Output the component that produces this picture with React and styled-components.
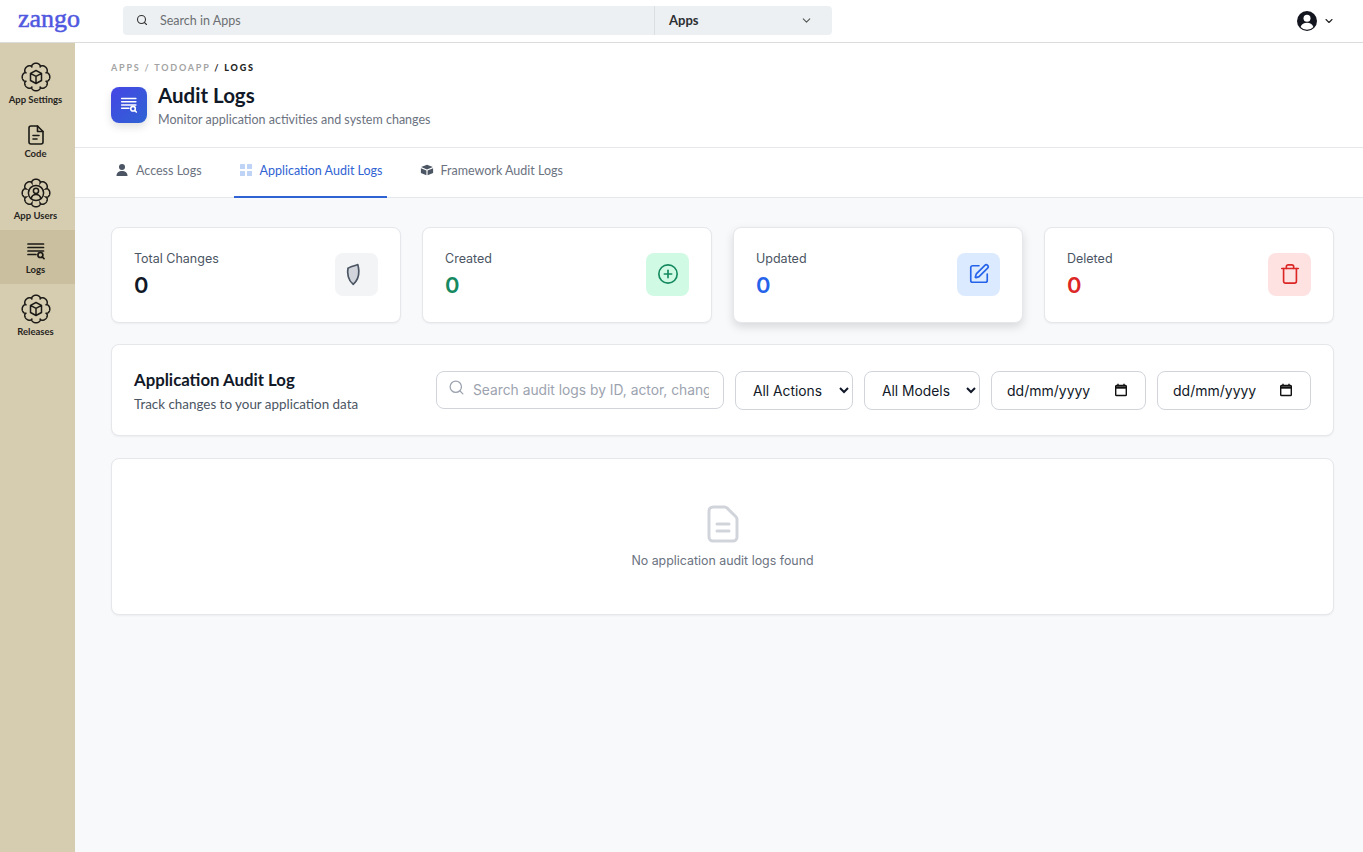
import styled, { createGlobalStyle } from 'styled-components';
import { ChevronDown, CirclePlus, Search, SquarePen, Trash } from 'lucide-react';

const GlobalStyle = createGlobalStyle`
  html, body {
    margin: 0;
    height: 100%;
    background: #fff;
  }
  #root {
    height: 100%;
  }
  * {
    box-sizing: border-box;
  }
`;

const gearPath = () => {
  const points = [];
  for (let i = 0; i < 240; i++) {
    const angle = (i / 240) * Math.PI * 2;
    const radius = 10.8 + 3 * Math.pow(Math.abs(Math.cos(angle * 4)), 0.45);
    points.push(`${(16 + radius * Math.sin(angle)).toFixed(2)} ${(16 - radius * Math.cos(angle)).toFixed(2)}`);
  }
  return `M${points.join('L')}Z`;
};

const GearCube = () => (
  <svg width="32" height="32" viewBox="0 0 32 32" fill="none" stroke="#1b1a16" strokeWidth="1.5" strokeLinejoin="round">
    <path d={gearPath()} />
    <path d="M16 9.500l5.500 2.800v7.200L16 22.500l-5.500-3v-7.200zM10.500 12.300l5.500 3 5.500-3M16 15.300v7.200" />
  </svg>
);

const GearUser = () => (
  <svg width="32" height="32" viewBox="0 0 32 32" fill="none" stroke="#1b1a16" strokeWidth="1.5" strokeLinecap="round">
    <path d={gearPath()} />
    <circle cx="16" cy="16" r="7.600" />
    <circle cx="16" cy="13.800" r="2.600" />
    <path d="M11.200 21.400c.6-2.800 2.400-4 4.800-4s4.200 1.200 4.800 4" />
  </svg>
);

const CodeFile = () => (
  <svg width="24" height="24" viewBox="0 0 24 24" fill="none" stroke="#1b1a16" strokeWidth="1.6" strokeLinecap="round" strokeLinejoin="round">
    <path d="M13.500 3H7a2 2 0 0 0-2 2v14a2 2 0 0 0 2 2h10a2 2 0 0 0 2-2V8.500z" />
    <path d="M13.500 3v5.500H19M9 12.500h6M9 16h4" />
  </svg>
);

const LogLines = ({ color = '#1b1a16', size = 24 }) => (
  <svg width={size} height={size} viewBox="0 0 24 24" fill="none" stroke={color} strokeWidth="1.7" strokeLinecap="round">
    <path d="M4 5h15.500M4 8.500h15.500M4 12h15.500M4 15.500h8" />
    <circle cx="16.400" cy="16" r="2.500" />
    <path d="M18.300 18l1.700 1.700" />
  </svg>
);

const Avatar = () => (
  <svg width="22" height="22" viewBox="0 0 22 22">
    <circle cx="11" cy="11" r="10" fill="#14161f" />
    <circle cx="11" cy="8.300" r="3.500" fill="#fff" />
    <path d="M4.600 17c1-3 3.400-4.300 6.400-4.300s5.400 1.300 6.400 4.300a8.600 8.600 0 0 1-12.800 0z" fill="#fff" />
  </svg>
);

const PersonIcon = () => (
  <svg width="14" height="14" viewBox="0 0 14 14" fill="#4b5563">
    <circle cx="7" cy="4" r="3" />
    <path d="M1.500 13c0-3.300 2.200-5 5.500-5s5.500 1.700 5.500 5z" />
  </svg>
);

const GridIcon = () => (
  <svg width="14" height="14" viewBox="0 0 14 14" fill="#bfd3f6">
    <rect x="1" y="1" width="5" height="5" rx=".6" />
    <rect x="8" y="1" width="5" height="5" rx=".6" />
    <rect x="1" y="8" width="5" height="5" rx=".6" />
    <rect x="8" y="8" width="5" height="5" rx=".6" />
  </svg>
);

const BoxIcon = () => (
  <svg width="14" height="14" viewBox="0 0 14 14" fill="#4b5563">
    <path d="M7 1.800l5.800 2.300L7 6.400 1.200 4.100z" />
    <path d="M.9 5.200l5.500 2.200v4.800L.9 10zM13.100 5.200L7.600 7.400v4.800l5.500-2.200z" />
  </svg>
);

const ShieldIcon = () => (
  <svg width="24" height="24" viewBox="1 0 24 24" fill="#d1d5db" stroke="#4b5563" strokeWidth="1.700" strokeLinejoin="round">
    <path d="M13.800 2.600C11 3.400 7 4.500 4 6.200 3 11 4 18.500 9.200 22.300 13 19 15 14 14.800 9c-.1-2.500-.5-4.500-1-6.400z" />
  </svg>
);

const EmptyFile = () => (
  <svg width="34" height="40" viewBox="0 0 34 40" fill="none" stroke="#d1d5db" strokeWidth="3" strokeLinecap="round" strokeLinejoin="round">
    <path d="M7 3h11.500c1 0 2 .4 2.700 1.100l8.700 8.700c.7.700 1.100 1.700 1.100 2.700V33a4 4 0 0 1-4 4H7a4 4 0 0 1-4-4V7a4 4 0 0 1 4-4z" />
    <path d="M11 20h12M11 27h12" />
  </svg>
);

const CalendarGlyph = () => (
  <svg width="14" height="14" viewBox="0 0 14 14" fill="none" stroke="#111" strokeWidth="1.400">
    <rect x="1.700" y="2.500" width="10.600" height="10" rx=".8" />
    <path d="M1.700 4.500h10.600" strokeWidth="2.400" />
    <path d="M4 .8v2M10 .8v2" />
  </svg>
);

const navItems = [
  { label: 'App Settings', icon: <GearCube /> },
  { label: 'Code', icon: <CodeFile /> },
  { label: 'App Users', icon: <GearUser /> },
  { label: 'Logs', icon: <LogLines />, active: true },
  { label: 'Releases', icon: <GearCube /> },
];

const stats = [
  { label: 'Total Changes', color: '#111827', tint: '#f3f4f6', icon: <ShieldIcon /> },
  { label: 'Created', color: '#15895f', tint: '#d1fae5', icon: <CirclePlus size={22} color="#15895f" strokeWidth={1.8} /> },
  { label: 'Updated', color: '#2563eb', tint: '#dbeafe', icon: <SquarePen size={22} color="#2563eb" strokeWidth={1.8} />, raised: true },
  { label: 'Deleted', color: '#dc2626', tint: '#fee2e2', icon: <Trash size={22} color="#dc2626" strokeWidth={1.8} /> },
];

const App = () => (
  <Page>
    <GlobalStyle />
    <TopBar>
      <Logo>zango</Logo>
      <SearchBar>
        <SearchArea>
          <Search size={12} color="#333" strokeWidth={2.2} />
          <span>Search in Apps</span>
        </SearchArea>
        <AppsArea>
          <span>Apps</span>
          <ChevronDown size={13} color="#555" />
        </AppsArea>
      </SearchBar>
      <UserMenu>
        <Avatar />
        <ChevronDown size={12} color="#222" strokeWidth={2.2} />
      </UserMenu>
    </TopBar>

    <Body>
      <Sidebar>
        {navItems.map(item => (
          <NavItem key={item.label} $active={item.active}>
            {item.icon}
            <NavLabel>{item.label}</NavLabel>
          </NavItem>
        ))}
      </Sidebar>

      <Main>
        <PageHeader>
          <Breadcrumb>
            APPS / TODOAPP <strong>/ LOGS</strong>
          </Breadcrumb>
          <TitleRow>
            <TitleIcon>
              <LogLines color="#fff" size={22} />
            </TitleIcon>
            <div>
              <Title>Audit Logs</Title>
              <Subtitle>Monitor application activities and system changes</Subtitle>
            </div>
          </TitleRow>
        </PageHeader>

        <Tabs>
          <Tab>
            <PersonIcon />
            Access Logs
          </Tab>
          <Tab $active>
            <GridIcon />
            Application Audit Logs
          </Tab>
          <Tab>
            <BoxIcon />
            Framework Audit Logs
          </Tab>
        </Tabs>

        <Content>
          <StatsGrid>
            {stats.map(stat => (
              <StatCard key={stat.label} $raised={stat.raised}>
                <div>
                  <StatLabel>{stat.label}</StatLabel>
                  <StatValue $color={stat.color}>0</StatValue>
                </div>
                <StatIcon $tint={stat.tint}>{stat.icon}</StatIcon>
              </StatCard>
            ))}
          </StatsGrid>

          <FilterCard>
            <div>
              <FilterTitle>Application Audit Log</FilterTitle>
              <FilterHint>Track changes to your application data</FilterHint>
            </div>
            <Filters>
              <SearchBox>
                <Search size={17} color="#9ca3af" strokeWidth={1.8} />
                <SearchInput placeholder="Search audit logs by ID, actor, changes..." />
              </SearchBox>
              <Select $width={118} defaultValue="all">
                <option value="all">All Actions</option>
              </Select>
              <Select $width={116} defaultValue="all">
                <option value="all">All Models</option>
              </Select>
              <DateBox $width={155}>
                <span>dd/mm/yyyy</span>
                <CalendarGlyph />
              </DateBox>
              <DateBox $width={154}>
                <span>dd/mm/yyyy</span>
                <CalendarGlyph />
              </DateBox>
            </Filters>
          </FilterCard>

          <EmptyCard>
            <EmptyFile />
            <EmptyText>No application audit logs found</EmptyText>
          </EmptyCard>
        </Content>
      </Main>
    </Body>
  </Page>
);

export default App;

const Page = styled.div`
  display: flex;
  flex-direction: column;
  height: 100vh;
  font-family: Inter, 'Liberation Sans', sans-serif;
  color: #111827;
`;

const TopBar = styled.header`
  display: flex;
  align-items: center;
  flex: none;
  height: 43px;
  padding: 0 28px 1px 18px;
  border-bottom: 1px solid #dcdcdc;
  background: #fff;
`;

const Logo = styled.div`
  width: 105px;
  margin-top: -4px;
  font-family: 'Liberation Serif', serif;
  font-size: 26px;
  font-weight: 400;
  line-height: 28px;
  color: #5058e0;
  -webkit-text-stroke: 0.5px #5058e0;
`;

const SearchBar = styled.div`
  display: flex;
  width: 709px;
  height: 29px;
  border-radius: 4px;
  background: #edf0f2;
  font-family: Lato, sans-serif;
  font-size: 13px;
`;

const SearchArea = styled.div`
  display: flex;
  align-items: center;
  gap: 12px;
  width: 532px;
  padding: 0 0 1px 13px;
  border-right: 1px solid #dcdfe1;
  font-size: 12.500px;
  color: #6b6f73;
`;

const AppsArea = styled.div`
  display: flex;
  align-items: center;
  justify-content: space-between;
  flex: 1;
  padding: 0 19px 1px 14px;
  font-weight: 700;
  color: #2c2f33;
`;

const UserMenu = styled.div`
  display: flex;
  align-items: center;
  gap: 5px;
  margin-left: auto;
`;

const Body = styled.div`
  display: flex;
  flex: 1;
  min-height: 0;
`;

const Sidebar = styled.nav`
  flex: none;
  width: 75px;
  padding-top: 9px;
  background: #d6ccb0;
`;

const NavItem = styled.div`
  display: flex;
  flex-direction: column;
  align-items: center;
  padding: 10px 4px 9px 0;
  background: ${p => (p.$active ? '#cabf9e' : 'transparent')};

  svg {
    margin: -1px 0 2px;
  }
`;

const NavLabel = styled.div`
  font-family: Lato, sans-serif;
  font-size: 9.500px;
  font-weight: 700;
  line-height: 10px;
  color: #26241d;
  white-space: nowrap;
`;

const Main = styled.main`
  display: flex;
  flex-direction: column;
  flex: 1;
  min-width: 0;
  background: #f8f9fb;
`;

const PageHeader = styled.div`
  height: 105px;
  padding: 19px 36px 0;
  border-bottom: 1px solid #e5e7eb;
  background: #fff;
`;

const Breadcrumb = styled.div`
  font-family: Lato, sans-serif;
  font-size: 9px;
  font-weight: 700;
  line-height: 12px;
  letter-spacing: 1.800px;
  color: #a3a3a3;

  strong {
    color: #222;
  }
`;

const TitleRow = styled.div`
  display: flex;
  align-items: flex-start;
  gap: 11px;
  margin-top: 13px;
`;

const TitleIcon = styled.div`
  display: flex;
  align-items: center;
  justify-content: center;
  width: 36px;
  height: 36px;
  border-radius: 8px;
  background: linear-gradient(135deg, #4546e5, #2f63d3);
  box-shadow: 0 4px 8px rgba(0, 0, 0, 0.12);
`;

const Title = styled.h1`
  margin: -2px 0 0;
  font-family: Lato, sans-serif;
  font-size: 20.500px;
  font-weight: 700;
  line-height: 20px;
  color: #111827;
`;

const Subtitle = styled.p`
  margin: 6px 0 0;
  font-family: Lato, sans-serif;
  font-size: 12.500px;
  line-height: 18px;
  color: #6b7280;
`;

const Tabs = styled.div`
  display: flex;
  flex: none;
  gap: 28px;
  height: 50px;
  padding-left: 35px;
  border-bottom: 1px solid #e5e7eb;
  background: #fff;
`;

const Tab = styled.div`
  display: flex;
  align-items: center;
  gap: 7px;
  height: 50px;
  padding: 0 4px 4px 5px;
  border-bottom: 2px solid ${p => (p.$active ? '#2f63d3' : 'transparent')};
  font-family: Lato, sans-serif;
  font-size: 12.500px;
  color: ${p => (p.$active ? '#2f63d3' : '#6b7280')};
`;

const Content = styled.div`
  display: flex;
  flex-direction: column;
  gap: 21px;
  padding: 29px 29px 0 36px;
`;

const StatsGrid = styled.div`
  display: grid;
  grid-template-columns: repeat(4, 1fr);
  gap: 21px;
`;

const Card = styled.section`
  border: 1px solid #e5e7eb;
  border-radius: 8px;
  background: #fff;
  box-shadow: 0 1px 2px rgba(0, 0, 0, 0.05);
`;

const StatCard = styled(Card)`
  display: flex;
  align-items: center;
  justify-content: space-between;
  height: 96px;
  padding: 0 22px 2px;
  box-shadow: ${p => (p.$raised ? '0 4px 10px rgba(0, 0, 0, 0.13)' : '0 1px 2px rgba(0, 0, 0, 0.05)')};
`;

const StatLabel = styled.div`
  font-size: 12.500px;
  line-height: 18px;
  color: #4b5563;
`;

const StatValue = styled.div`
  margin-top: 4px;
  font-size: 22px;
  font-weight: 600;
  line-height: 26px;
  color: ${p => p.$color};
`;

const StatIcon = styled.div`
  display: flex;
  align-items: center;
  justify-content: center;
  width: 43px;
  height: 43px;
  border-radius: 8px;
  background: ${p => p.$tint};
`;

const FilterCard = styled(Card)`
  display: flex;
  align-items: center;
  justify-content: space-between;
  height: 92px;
  padding: 0 22px;
`;

const FilterTitle = styled.h2`
  margin: 2px 0 0;
  font-family: Lato, sans-serif;
  font-size: 16.800px;
  font-weight: 700;
  line-height: 20px;
  color: #111827;
`;

const FilterHint = styled.p`
  margin: 6px 0 0;
  font-family: Lato, sans-serif;
  font-size: 13.400px;
  line-height: 16px;
  color: #4b5563;
`;

const Filters = styled.div`
  display: flex;
  align-items: flex-start;
  gap: 11px;
`;

const SearchBox = styled.label`
  display: flex;
  align-items: center;
  gap: 8px;
  width: 288px;
  height: 38px;
  padding: 0 14px 5px 11px;
  border: 1px solid #d1d5db;
  border-radius: 8px;
`;

const SearchInput = styled.input`
  flex: 1;
  min-width: 0;
  margin-top: 6px;
  padding: 0;
  border: 0;
  outline: 0;
  background: transparent;
  font-family: Inter, sans-serif;
  font-size: 13.800px;
  color: #111827;

  &::placeholder {
    color: #9ca3af;
  }
`;

const Select = styled.select`
  width: ${p => p.$width}px;
  height: 39px;
  padding: 2px 0 0 13px;
  border: 1px solid #d1d5db;
  border-radius: 8px;
  background: #fff;
  font-family: Inter, sans-serif;
  font-size: 13.800px;
  color: #111827;
`;

const DateBox = styled.div`
  display: flex;
  align-items: center;
  justify-content: space-between;
  width: ${p => p.$width}px;
  height: 39px;
  padding: 0 17px 0 15px;
  border: 1px solid #d1d5db;
  border-radius: 8px;
  font-size: 14px;
  color: #111827;
`;

const EmptyCard = styled(Card)`
  display: flex;
  flex-direction: column;
  align-items: center;
  height: 157px;
  margin-top: 1px;
  padding-top: 45px;
`;

const EmptyText = styled.p`
  margin: 8px 0 0;
  font-size: 12.400px;
  line-height: 18px;
  color: #6b7280;
`;
